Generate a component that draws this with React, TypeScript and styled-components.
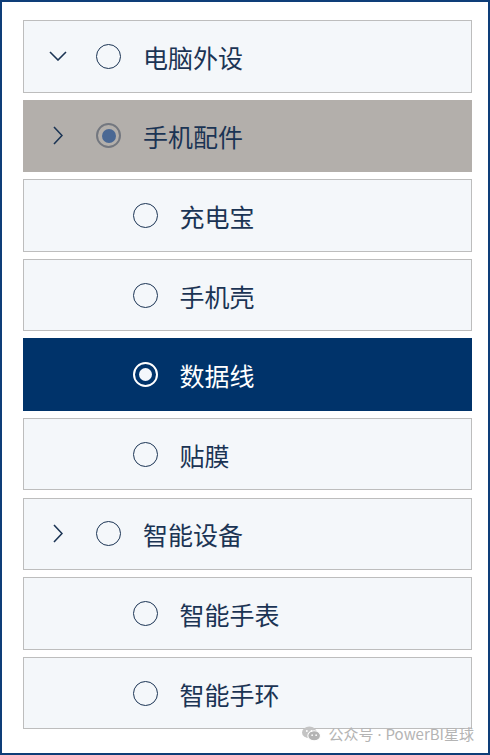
import React from "react";
import styled, { createGlobalStyle, css } from "styled-components";

const Global = createGlobalStyle`
  html, body { margin: 0; padding: 0; background: #ffffff; }
  body { font-family: "Noto Sans CJK SC", "Noto Sans", sans-serif; }
`;

const Frame = styled.div`
  position: relative;
  box-sizing: border-box;
  width: 490px;
  height: 755px;
  border: 2px solid #0e3d78;
  background: #ffffff;
  padding: 18px 16px 0 21px;
`;

const List = styled.div`
  display: grid;
  grid-template-rows: repeat(9, 72.5px);
  row-gap: 7.1px;
`;

type Variant = "normal" | "partial" | "selected";

const Row = styled.div<{ $variant: Variant; $level: number }>`
  box-sizing: border-box;
  display: flex;
  align-items: center;
  padding-left: ${(p) => (p.$level === 0 ? 23.5 : 0)}px;
  border: 1.5px solid #bdbdbd;
  background: #f4f7fa;
  color: #1b3454;
  font-size: 25px;
  ${(p) =>
    p.$variant === "partial" &&
    css`
      background: #b3afab;
      border-color: #b3afab;
    `}
  ${(p) =>
    p.$variant === "selected" &&
    css`
      background: #00336a;
      border-color: #00336a;
      color: #ffffff;
    `}
`;

const ChevronSlot = styled.div`
  width: 20px;
  height: 20px;
  display: flex;
  align-items: center;
  justify-content: center;
  margin-right: 28.5px;
  color: #1b3454;
`;

const Indent = styled.div`
  width: 108.5px;
  flex: none;
`;

const Radio = styled.div<{ $variant: Variant }>`
  box-sizing: border-box;
  width: 25px;
  height: 25px;
  border-radius: 50%;
  border: 1.5px solid #1b3454;
  flex: none;
  display: flex;
  align-items: center;
  justify-content: center;
  margin-right: 22px;
  ${(p) =>
    p.$variant === "partial" &&
    css`
      border: 2px solid #73777f;
      &::after {
        content: "";
        width: 14px;
        height: 14px;
        border-radius: 50%;
        background: #4a6894;
      }
    `}
  ${(p) =>
    p.$variant === "selected" &&
    css`
      border: 2px solid #ffffff;
      &::after {
        content: "";
        width: 13px;
        height: 13px;
        border-radius: 50%;
        background: #f4f7fc;
      }
    `}
`;

const Label = styled.span`
  line-height: 1;
  position: relative;
  top: 1px;
`;

const Watermark = styled.div`
  position: absolute;
  right: 14px;
  bottom: 9px;
  display: flex;
  align-items: center;
  gap: 7px;
  color: #b4b4b4;
  font-size: 15px;
  font-family: "Noto Sans CJK SC", "Noto Sans", sans-serif;
`;

const Dot = styled.span`
  font-family: "Noto Sans", sans-serif;
  margin: 0 4px;
`;

const ChevronDown = () => (
  <svg width="18" height="10" viewBox="0 0 18 10" fill="none">
    <path d="M1 1 L9 9 L17 1" stroke="currentColor" strokeWidth="1.6" />
  </svg>
);

const ChevronRight = () => (
  <svg width="10" height="19" viewBox="0 0 10 19" fill="none">
    <path d="M1 1 L9 9.5 L1 18" stroke="currentColor" strokeWidth="1.6" />
  </svg>
);

const WeChat = () => (
  <svg width="19" height="16" viewBox="0 0 18 15">
    <ellipse cx="7" cy="6" rx="7" ry="5.6" fill="#c4c4c4" />
    <ellipse cx="11.5" cy="9.2" rx="6" ry="4.8" fill="#b4b4b4" stroke="#fff" strokeWidth="1" />
    <circle cx="4.6" cy="4.6" r="0.9" fill="#fff" />
    <circle cx="9" cy="4.6" r="0.9" fill="#fff" />
    <circle cx="9.6" cy="8.6" r="0.8" fill="#fff" />
    <circle cx="13.4" cy="8.6" r="0.8" fill="#fff" />
  </svg>
);

type Item = {
  label: string;
  level: number;
  variant: Variant;
  chevron?: "down" | "right";
};

const items: Item[] = [
  { label: "电脑外设", level: 0, variant: "normal", chevron: "down" },
  { label: "手机配件", level: 0, variant: "partial", chevron: "right" },
  { label: "充电宝", level: 1, variant: "normal" },
  { label: "手机壳", level: 1, variant: "normal" },
  { label: "数据线", level: 1, variant: "selected" },
  { label: "贴膜", level: 1, variant: "normal" },
  { label: "智能设备", level: 0, variant: "normal", chevron: "right" },
  { label: "智能手表", level: 1, variant: "normal" },
  { label: "智能手环", level: 1, variant: "normal" },
];

export default function App() {
  return (
    <>
      <Global />
      <Frame>
        <List>
          {items.map((it) => (
            <Row key={it.label} $variant={it.variant} $level={it.level}>
              {it.level === 0 ? (
                <ChevronSlot>
                  {it.chevron === "down" ? <ChevronDown /> : <ChevronRight />}
                </ChevronSlot>
              ) : (
                <Indent />
              )}
              <Radio $variant={it.variant} />
              <Label>{it.label}</Label>
            </Row>
          ))}
        </List>
        <Watermark>
          <WeChat />
          <span>
            公众号<Dot>·</Dot>PowerBI星球
          </span>
        </Watermark>
      </Frame>
    </>
  );
}
